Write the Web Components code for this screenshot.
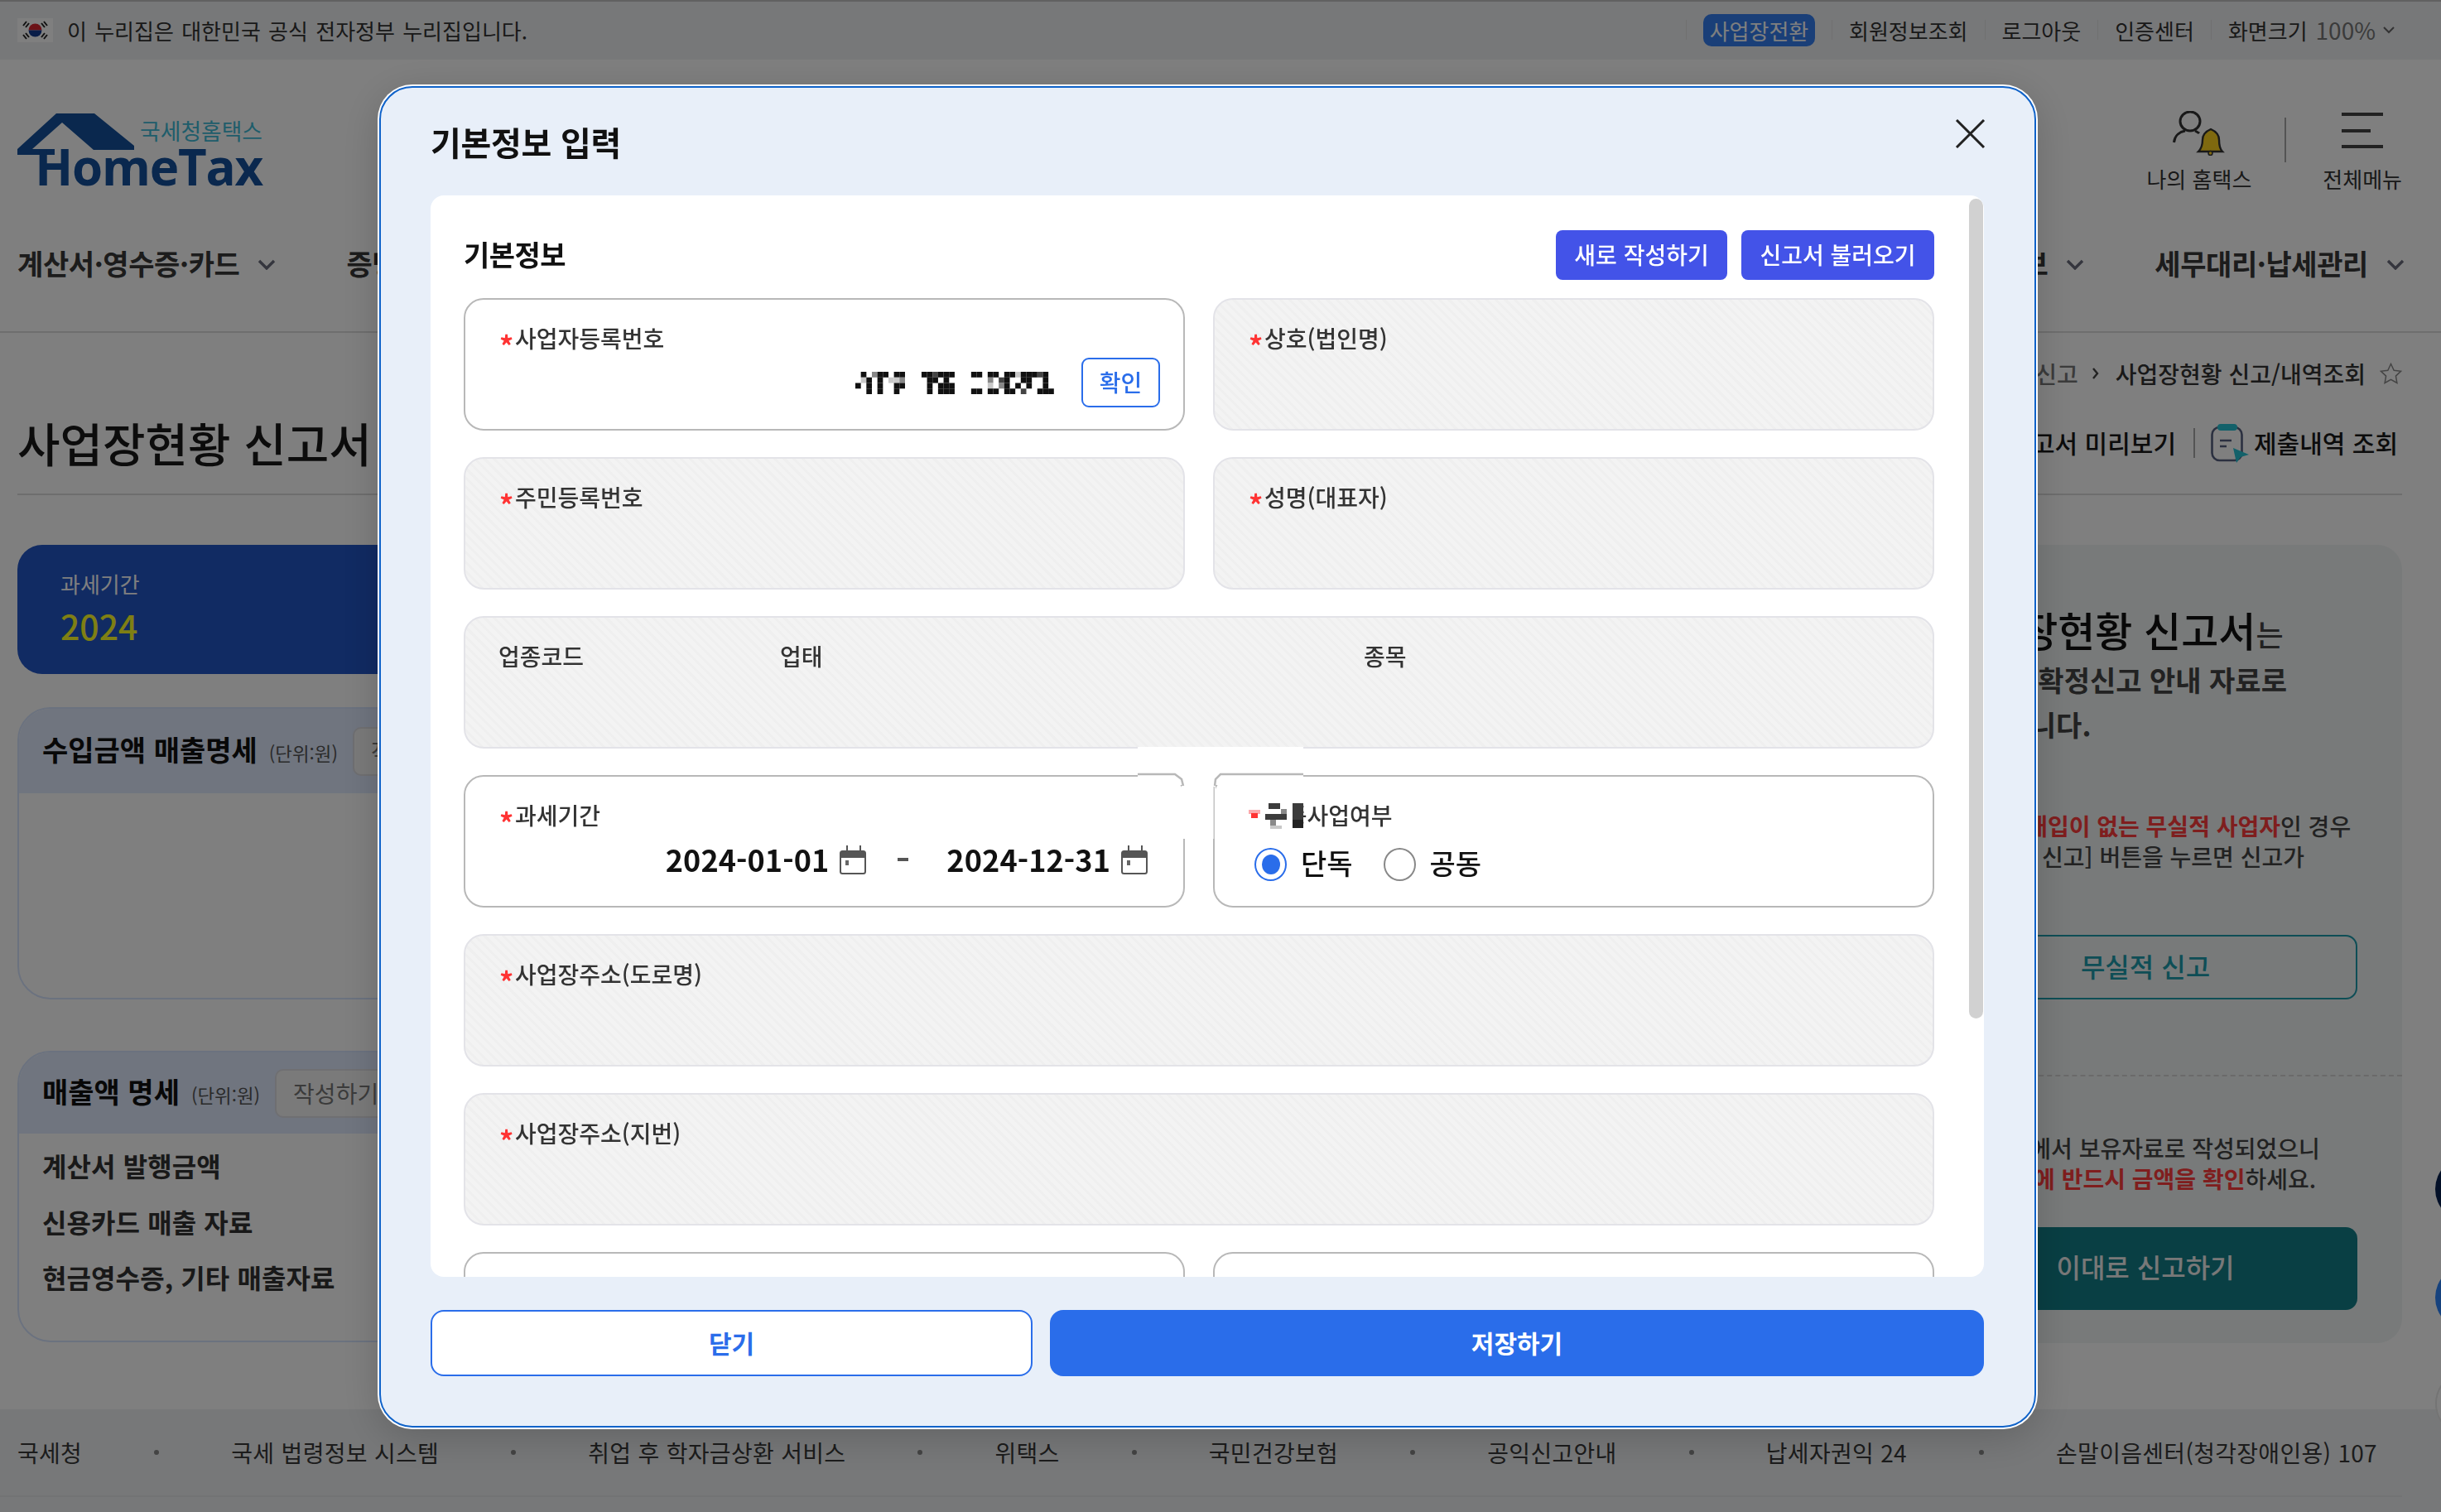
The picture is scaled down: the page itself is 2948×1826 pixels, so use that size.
<!DOCTYPE html>
<html lang="ko">
<head>
<meta charset="utf-8">
<title>사업장현황 신고서</title>
<style>
html,body{margin:0;padding:0;width:2948px;height:1826px;overflow:hidden;background:#fff;font-family:"Noto Sans CJK KR","Noto Sans",sans-serif;color:#333}
</style>
</head>
<body>
<tax-page></tax-page>
<tax-modal></tax-modal>
<script>
const FONT='"Noto Sans CJK KR","Noto Sans",sans-serif';
function def(name,css,html,init){
  customElements.define(name,class extends HTMLElement{
    constructor(){super();const r=this.attachShadow({mode:'open'});
      r.innerHTML='<style>*{box-sizing:border-box}'+css+'</style>'+html;
      if(init)init(r,this);}
  });
}
def('chev-icon',':host{display:inline-flex}svg{display:block}',
 '<svg width="22" height="13" viewBox="0 0 22 13"><path d="M2 2l9 9 9-9" fill="none" stroke="#6a6c7c" stroke-width="3.4"/></svg>');
def('cal-icon',':host{display:inline-flex}svg{display:block}',
 '<svg width="32" height="35" viewBox="0 0 32 35"><rect x="1" y="7" width="30" height="27" rx="2.5" fill="#fff" stroke="#555" stroke-width="2"/><path d="M1 9.5a2.500 2.500 0 0 1 2.500-2.500h25a2.500 2.500 0 0 1 2.500 2.500v5.500H1z" fill="#555"/><path d="M9 0v7M25 0v7" stroke="#555" stroke-width="2"/><rect x="7" y="18" width="4" height="6" fill="#666"/></svg>');
def('gov-bar',`:host{display:flex;align-items:center;height:72px;border-top:2px solid #c2c2c2;background:#eef0f2;padding:0 56px 2px 21px;font-size:26px;color:#333}
 .flag{margin-right:17px;display:block}
 .msg{word-spacing:2px}
 nav{margin-left:auto;display:flex;align-items:center}
 .s{width:1px;height:24px;background:#e0e0e0}
 .a{padding:0 20px}
 .pill{height:39px;width:135px;margin:0 20px 0 20px;background:#347ef0;color:#fff;border-radius:10px;display:flex;align-items:center;justify-content:center;font-size:26px}
 .z{color:#777;margin-left:10px;font-size:28px}
 .a.last{padding-right:0}
 svg.c{margin-left:9px}`,
 `<svg class="flag" width="43" height="29" viewBox="0 0 43 29"><rect width="43" height="29" fill="#fff"/><path d="M13.500 14.500a8 8 0 0 1 16 0z" fill="#d8242f"/><path d="M13.500 14.500a8 8 0 0 0 16 0z" fill="#123a90"/><g stroke="#222" stroke-width="2" fill="none"><path d="M7 9l4-5M10 11l4-5M29 6l4 5M32 4l4 5M7 20l4 5M10 18l4 5M29 23l4-5M32 25l4-5"/></g></svg>
 <span class="msg">이 누리집은 대한민국 공식 전자정부 누리집입니다.</span>
 <nav><span class="s"></span><span class="pill">사업장전환</span><span class="s"></span><span class="a">회원정보조회</span><span class="s"></span><span class="a">로그아웃</span><span class="s"></span><span class="a">인증센터</span><span class="s"></span><span class="a last">화면크기</span><span class="z">100%</span><svg class="c" width="14" height="9" viewBox="0 0 14 9"><path d="M1 1l6 6 6-6" fill="none" stroke="#666" stroke-width="2"/></svg></nav>`);
def('site-logo',`:host{display:grid;width:296px;height:92px}
 .st{grid-area:1/1;display:flex;flex-direction:column;align-items:flex-end}
 svg{grid-area:1/1;display:block;margin-top:3px}
 .k{font-size:26.800px;line-height:34px;color:#3fbbd6;height:34px;margin-top:7px}
 .h{font:700 60px/50px "Open Sans",sans-serif;color:#14509c;letter-spacing:-1.200px;height:50px;margin-top:1px}`,
 `<svg width="296" height="90" viewBox="0 0 296 90"><path d="M0 43 47 0H93L141 39V44H92L54 11 18 43H45V50H0z" fill="#14509c"/></svg>
  <div class="st"><span class="k">국세청홈택스</span><span class="h">HomeTax</span></div>`);
def('site-tools',`:host{display:flex;color:#333;font-size:26px}
 .col{display:flex;flex-direction:column;align-items:center}
 .ic{height:54px;display:flex;align-items:flex-start}
 .t{margin-top:8px;line-height:40px}
 .v{width:2px;height:54px;background:#a8a8a8;margin:8px 44px 0 40px}
 .m{display:flex;flex-direction:column;align-items:flex-start;justify-content:space-between;width:50px;height:43px;margin-top:2px}
 .m i{display:block;height:4px;width:50px;background:#444}
 .m i:nth-child(2){width:35px}`,
 `<div class="col"><div class="ic"><svg width="63" height="54" viewBox="0 0 63 54"><ellipse cx="21" cy="12.500" rx="12" ry="11.500" fill="none" stroke="#333" stroke-width="3"/><path d="M1.500 38C2.500 29 9 25 15 24M27 24c2 1 4 2 5 3" fill="none" stroke="#333" stroke-width="3"/><path d="M31 49h29c-3-3-4-6-4-14 0-6-3-10-10-13-7 3-10 7-10 13 0 8-2 11-5 14z" fill="#ffd21e" stroke="#333" stroke-width="2.400"/><circle cx="45.500" cy="51" r="2.500" fill="#ffd21e" stroke="#333" stroke-width="1.500"/></svg></div><span class="t">나의 홈택스</span></div>
  <span class="v"></span>
  <div class="col"><div class="ic"><div class="m"><i></i><i></i><i></i></div></div><span class="t">전체메뉴</span></div>`);
def('main-nav',`:host{display:flex;align-items:center;height:130px;padding:0 44px 38px 21px;border-bottom:2px solid #dcdcdc;font-size:34px;font-weight:600;color:#383838}
 .i{display:flex;align-items:center;gap:22px;white-space:nowrap;letter-spacing:-.4px}
 .i+.i{margin-left:85px}
 .i.sp{margin-left:auto}
 chev-icon{margin-top:4px}`,
 `<div class="i">계산서·영수증·카드<chev-icon></chev-icon></div>
  <div class="i">증명·등록·신청<chev-icon></chev-icon></div>
  <div class="i sp">상담·불복·제보<chev-icon></chev-icon></div>
  <div class="i">세무대리·납세관리<chev-icon></chev-icon></div>`);
def('page-head',`:host{display:block;margin:0 47px 0 21px;border-bottom:2px solid #dcdcdc;height:196px;padding-top:24px}
 .cr{height:50px;display:flex;align-items:center;justify-content:flex-end;font-size:28px;color:#777;font-weight:500}
 .cr b{color:#333;font-weight:500}
 .g{margin:0 20px 0 17px}
 .st{margin-left:17px}
 .tr{height:90px;margin-top:14px;display:flex;align-items:center;justify-content:space-between}
 h1{margin:0;font-size:56px;font-weight:500;color:#181818;line-height:90px;padding-bottom:2px}
 .ac{display:flex;align-items:center;font-size:30px;font-weight:500;color:#181818;padding-right:5px}
 .ac span{padding-bottom:2px}
 .bar{width:2px;height:36px;background:#a8a8a8;margin:0 19px 0 21px;padding:0}
 .ac svg{margin-right:6px;display:block}
 svg{display:block}`,
 `<div class="cr"><span>사업장현황 신고</span><svg class="g" width="8" height="14" viewBox="0 0 8 14"><path d="M1 1l5 6-5 6" fill="none" stroke="#444" stroke-width="2.400"/></svg><b>사업장현황 신고/내역조회</b><svg class="st" width="27" height="27" viewBox="0 0 27 27"><path d="M13.500 1.500l3.700 7.700 8.300 1.100-6.100 5.800 1.500 8.400-7.400-4.100-7.400 4.100 1.500-8.400L1.500 10.300l8.300-1.100z" fill="none" stroke="#888" stroke-width="1.500"/></svg></div>
  <div class="tr"><h1>사업장현황 신고서</h1><div class="ac"><span>신고서 미리보기</span><span class="bar"></span><svg width="46" height="47" viewBox="0 0 46 47"><rect x="1.500" y="4" width="36" height="40" rx="9" fill="none" stroke="#566080" stroke-width="2.600"/><rect x="8" y="0" width="24" height="8" rx="4" fill="#26c2d4"/><path d="M11 20h14M11 27h8" stroke="#566080" stroke-width="2.600"/><path d="M27 29l19 8-10 3-5 7z" fill="#26c2d4"/></svg><span>제출내역 조회</span></div></div>`);
def('period-card',`:host{display:flex;flex-direction:column;height:156px;background:#2256c6;border-radius:30px;padding:29px 52px 0}
 .l{font-size:26px;line-height:36px;color:#fff}
 .y{font-size:41px;line-height:50px;font-weight:500;color:#ffff28;margin-top:7px}`,
 '<span class="l">과세기간</span><span class="y">2024</span>');
def('amount-card',`:host{display:block;border:2px solid #d6e4ff;border-radius:40px;overflow:hidden;background:#fff}
 .h{display:flex;align-items:center;padding:0 28px;background:#e0eafe}
 h3{margin:0 0 5px;font-size:34px;font-weight:700;color:#111;line-height:50px}
 small{font-size:22.400px;color:#555;margin-left:14px;margin-top:4px}
 .b{height:59px;border:2px solid #dfdfe4;background:#f4f4f4;border-radius:10px;padding:0 20px;display:flex;align-items:center;font-size:28px;color:#777;margin-left:18px}
 .r{padding:5px 28px 0}
 ::slotted(p){margin:0;height:67.500px;line-height:67.500px;font-size:32px;font-weight:600;color:#333;letter-spacing:.1px}`,
 '<div class="h" part="h"><h3><slot name="t"></slot></h3><small>(단위:원)</small><span class="b">작성하기</span></div><div class="r"><slot></slot></div>',
 (r,e)=>{r.querySelector('.h').style.height=(e.getAttribute('head')||102)+'px';e.style.height=e.getAttribute('h')+'px';});
def('info-panel',`:host{display:block;height:964px;background:#f0f4f4;border-radius:30px;padding:75px 54px 40px;color:#444}
 .tx{margin-left:23px;white-space:nowrap}
 .big{font-size:34px;line-height:54px;font-weight:600}
 .big b{font-size:49px;color:#111;font-weight:500;margin-left:-8px}
 .big .s{font-size:36px;font-weight:500}
 .sm{font-size:28px;line-height:37px;font-weight:500}
 .sm b{color:#ff3c3c;font-weight:700}
 .i1{margin-left:4px}.i2{margin-left:13px}.i3{margin-left:16px}
 .out,.fill{display:flex;align-items:center;justify-content:center;font-size:32px;font-weight:500;border-radius:14px}
 .out{height:78px;border:2px solid #1c9cac;color:#1c9cac;margin-top:76.500px;padding-bottom:4px}
 .dash{border-top:2px dashed #d4d4d4;margin:91px -54px 0}
 .fill{height:100px;background:#127e88;color:#f0f0f0;margin-top:40px;padding-bottom:6px}`,
 `<div class="tx big"><b>사업장현황 신고서</b><span class="s">는</span><br>사업장 확정신고 안내 자료로<br>활용됩니다.</div>
 <div class="tx sm" style="margin-top:76.500px"><span class="i1">수입과 <b>매입이 없는 무실적 사업자</b>인 경우</span><br><span class="i2">[무실적 신고] 버튼을 누르면 신고가</span></div>
 <div class="out">무실적 신고</div><div class="dash"></div>
 <div class="tx sm" style="margin-top:67.500px"><span class="i3">국세청에서 보유자료로 작성되었으니</span><br><span class="i2"><b>제출 전에 반드시 금액을 확인</b>하세요.</span></div>
 <div class="fill">이대로 신고하기</div>`);
def('site-footer',`:host{display:block;height:124px;background:#eef0f2}
 .r{height:106px;margin-right:47px;padding:0 30px 0 21px;border-bottom:2px solid #e4e6e8;display:flex;align-items:center;justify-content:space-between;font-size:28px;color:#383838;white-space:nowrap;letter-spacing:.3px}
 i{display:block;width:6px;height:6px;border-radius:50%;background:#888}`,
 `<div class="r"><span>국세청</span><i></i><span>국세 법령정보 시스템</span><i></i><span>취업 후 학자금상환 서비스</span><i></i><span>위택스</span><i></i><span>국민건강보험</span><i></i><span>공익신고안내</span><i></i><span>납세자권익 24</span><i></i><span>손말이음센터(청각장애인용) 107</span></div>`);
def('tax-page',`:host{display:block;width:2948px;height:1826px;position:relative;overflow:hidden;background:#fff;font-family:${FONT}}
 .top{display:flex;justify-content:space-between;height:200px;padding:62px 47px 0 21px}
 .main{height:1104px;padding:60px 47px 0 21px;display:grid;grid-template-columns:2210px 620px;justify-content:space-between;align-items:start}
 .left{display:flex;flex-direction:column}
 .fl{position:absolute;left:2941px;width:80px;height:80px;border-radius:50%}`,
 `<gov-bar></gov-bar>
  <div class="top"><site-logo></site-logo><site-tools></site-tools></div>
  <main-nav></main-nav><page-head></page-head>
  <div class="main"><div class="left"><period-card></period-card>
   <amount-card h="353" head="102" style="margin-top:40px"><span slot="t">수입금액 매출명세</span></amount-card>
   <amount-card h="352" head="98" style="margin-top:62px"><span slot="t">매출액 명세</span><p>계산서 발행금액</p><p>신용카드 매출 자료</p><p>현금영수증, 기타 매출자료</p></amount-card></div>
   <info-panel></info-panel></div>
  <site-footer></site-footer>
  <div class="fl" style="top:1396px;background:#062050"></div>
  <div class="fl" style="top:1527px;background:#2c84fc"></div>
  <div class="fl" style="top:1655px;background:#fff;border:2px solid #e8e8e8"></div>`);
def('form-field',`:host{display:block;height:160px;border:2px solid #b8b8b8;border-radius:24px;background:#fff;padding:27px 0 0 41px;color:#333;font-size:28px}
 :host([disabled]){border-color:#e3e3e8;background:repeating-linear-gradient(45deg,#f3f3f3 0 5px,#efefef 5px 8px)}
 .l{display:flex;height:38px;line-height:38px;font-weight:500}
 .s{display:none;width:19px;color:#f33;font-size:34px;font-weight:700;line-height:38px;padding-top:9px;flex:none}
 :host([required]) .s{display:block}`,
 '<div class="l"><span class="s">*</span><slot name="label"></slot></div><slot></slot>');
def('mosaic-value',':host{display:block;width:240px;height:27px}svg{display:block}','<svg width="240" height="27" viewBox="0 0 240 27"></svg>',(r)=>{
  const rows=[".#.g##.##...##d###...##.##.##l###d#..",
              ".l#.#.llg....##.#.......g.d#..##..#..",
              "#.#.#..##....#.###......l.g#.#.#..#..",
              "..#.#..#.....#.###...##.##.##.d..###."];
  const c={'#':'#111','d':'#444','g':'#888','l':'#c8c8c8'};let s='';
  rows.forEach((t,y)=>[...t].forEach((k,x)=>{if(c[k])s+=`<rect x="${x*6.66}" y="${y*6.75}" width="6.700" height="6.800" fill="${c[k]}"/>`;}));
  r.querySelector('svg').innerHTML=s;
});
def('seam-patch',':host{position:absolute;left:854px;top:666px;width:210px;height:120px;display:block}svg{display:block}',
 `<svg width="210" height="120" viewBox="1374 902 210 120">
   <rect x="1374" y="902" width="200" height="46" fill="#fff"/>
   <path d="M1374 935h45l8 6 2 8M1574 935h-100l-6 6-1 8" fill="none" stroke="#b8b8b8" stroke-width="2.500"/>
   <rect x="1427" y="949" width="8" height="64" fill="#fff"/>
   <rect x="1464" y="949" width="4" height="64" fill="#fff"/>
   <rect x="1465.500" y="950" width="1.500" height="63" fill="#c4c4c4"/>
   <rect x="1505" y="968" width="69" height="33" fill="#fff"/>
   <g fill="#fba9ac"><rect x="1508" y="978" width="14" height="5"/></g>
   <rect x="1511" y="982" width="8" height="6" fill="#f33"/>
   <g fill="#3c3c3c"><rect x="1532" y="970" width="14" height="7"/><rect x="1561" y="970" width="13" height="7"/><rect x="1528" y="983" width="26" height="7"/><rect x="1561" y="977" width="13" height="13"/><rect x="1561" y="990" width="13" height="10" fill="#222"/></g>
   <g fill="#8a8a8a"><rect x="1534" y="990" width="7" height="7"/><rect x="1547" y="977" width="7" height="6"/></g>
   <g fill="#c8c8c8"><rect x="1534" y="997" width="14" height="4"/></g>
  </svg>`);
def('tax-modal',`:host{position:fixed;inset:0;display:block;background:rgba(0,0,0,.5);font-family:${FONT}}
 .box{position:absolute;left:458px;top:104px;width:2001px;height:1620px;border:2px solid #0f62c9;border-radius:40px;box-shadow:0 0 0 2px #fff,0 10px 50px rgba(0,0,0,.18);background:#e8eff9;padding:0 61px 60px 60px;display:flex;flex-direction:column}
 .hd{height:130px;flex:none;display:flex;justify-content:space-between;align-items:center}
 h2{margin:0;font-size:40px;font-weight:700;color:#111;letter-spacing:-.300px}
 .x{align-self:flex-start;margin:38px -2px 0 0;display:block}
 .panel{flex:1;min-height:0;background:#fff;border-radius:16px;position:relative;overflow:hidden;padding:42px 60px 0 40px}
 .sb{position:absolute;right:1px;top:4px;width:17px;height:990px;background:#d1d1d1;border-radius:9px}
 .sh{display:flex;align-items:center;height:60px;margin-bottom:22px}
 .sh h3{margin:0;padding-bottom:4px;font-size:34px;font-weight:700;color:#111;letter-spacing:-.500px;flex:1}
 .sh button{height:60px;border:0;border-radius:8px;background:#4353e8;color:#fff;font:500 28px ${FONT};padding:0 0 3px;width:207px}
 .sh button+button{margin-left:17px;width:233px}
 .grid{display:grid;grid-template-columns:871px 871px;column-gap:34px;row-gap:32px;grid-auto-rows:160px}
 .w{grid-column:1/3}
 .cl{display:flex;margin-left:-1px}
 .cl span:nth-child(1){width:340px}
 .cl span:nth-child(2){width:705px}
 .v{display:flex;align-items:center;justify-content:flex-end;height:60px;margin-top:5px;padding-right:28px}
 .ok{width:95px;height:60px;border:2px solid #2a6dea;border-radius:9px;color:#2a6dea;background:#fff;font:500 28px ${FONT};margin-left:33px;padding:0 0 3px}
 .d{font-size:36px;font-weight:600;color:#111;line-height:60px;white-space:nowrap;letter-spacing:.1px;padding-bottom:2px}
 .v.dv{padding-right:43px}
 .dv cal-icon{margin-left:13px}
 .dash{width:13px;height:4px;background:#555;margin:0 46px 0 38px}
 .rd{display:flex;align-items:center;height:60px;margin-top:11px;padding-left:7px;font-size:34px;font-weight:500;color:#111}
 .rd span:not(.o){padding-bottom:6px}
 .o{width:39px;height:40px;border-radius:50%;border:2px solid #888;background:#fff;display:flex;align-items:center;justify-content:center;margin-right:17px}
 .o.on{border-color:#2a6dea}
 .o.on::after{content:"";width:22px;height:24px;border-radius:50%;background:#2a6dea}
 .lbl+.o{margin-left:37px}
 .ft{flex:none;display:flex;gap:21px;height:80px;margin-top:40px}
 .ft button{height:80px;border-radius:16px;font:600 30px ${FONT};padding:0 0 3px}
 .c{width:727px;background:#fff;border:2px solid #2a6dea;color:#2a6dea}
 .sv{flex:1;background:#2a6dea;border:0;color:#fff}`,
 `<div class="box" role="dialog" aria-label="기본정보 입력">
  <div class="hd"><h2>기본정보 입력</h2><svg class="x" width="37" height="35" viewBox="0 0 37 35"><path d="M2 1l33 33M35 1L2 34" stroke="#222" stroke-width="3"/></svg></div>
  <div class="panel">
   <div class="sh"><h3>기본정보</h3><button>새로 작성하기</button><button>신고서 불러오기</button></div>
   <div class="grid">
    <form-field required><span slot="label">사업자등록번호</span><div class="v"><mosaic-value></mosaic-value><button class="ok">확인</button></div></form-field>
    <form-field required disabled><span slot="label">상호(법인명)</span></form-field>
    <form-field required disabled><span slot="label">주민등록번호</span></form-field>
    <form-field required disabled><span slot="label">성명(대표자)</span></form-field>
    <form-field class="w" disabled><div slot="label" class="cl"><span>업종코드</span><span>업태</span><span>종목</span></div></form-field>
    <form-field required><span slot="label">과세기간</span><div class="v dv"><span class="d">2024-01-01</span><cal-icon></cal-icon><span class="dash"></span><span class="d">2024-12-31</span><cal-icon></cal-icon></div></form-field>
    <form-field required><span slot="label">공동사업여부</span><div class="rd"><span class="o on"></span><span class="lbl">단독</span><span class="o"></span><span>공동</span></div></form-field>
    <form-field class="w" required disabled><span slot="label">사업장주소(도로명)</span></form-field>
    <form-field class="w" required disabled><span slot="label">사업장주소(지번)</span></form-field>
    <form-field></form-field><form-field></form-field>
   </div>
   <seam-patch></seam-patch>
   <div class="sb"></div>
  </div>
  <div class="ft"><button class="c">닫기</button><button class="sv">저장하기</button></div>
 </div>`);
</script>
</body>
</html>
